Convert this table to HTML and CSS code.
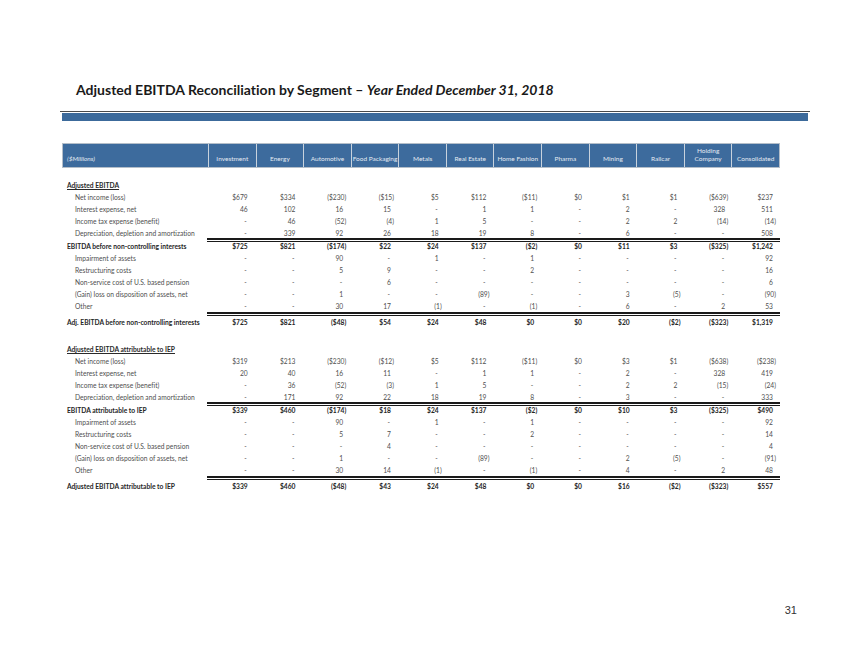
FILE: index.html
```html
<!DOCTYPE html>
<html>
<head>
<meta charset="utf-8">
<link rel="stylesheet" href="styles.css">
</head>
<body>
<div class="page">
  <h1 class="title">Adjusted EBITDA Reconciliation by Segment – <em>Year Ended December 31, 2018</em></h1>
  <div class="rule"></div>
  <div class="band"></div>

  <div class="table">
    <div class="row head">
      <div class="hl">($Millions)</div>
      <div>Investment</div><div>Energy</div><div>Automotive</div><div>Food Packaging</div><div>Metals</div><div>Real Estate</div><div>Home Fashion</div><div>Pharma</div><div>Mining</div><div>Railcar</div><div>Holding<br>Company</div><div>Consolidated</div>
    </div>

    <div class="section first">
      <div class="row"><div class="sh">Adjusted EBITDA</div></div>
      <div class="row"><div class="lb">Net income (loss)</div><div>$679</div><div>$334</div><div class="ng">($230)</div><div class="ng">($15)</div><div>$5</div><div>$112</div><div class="ng">($11)</div><div>$0</div><div>$1</div><div>$1</div><div class="ng">($639)</div><div>$237</div></div>
      <div class="row"><div class="lb">Interest expense, net</div><div>46</div><div>102</div><div>16</div><div>15</div><div class="d">-</div><div>1</div><div>1</div><div class="d">-</div><div>2</div><div class="d">-</div><div>328</div><div>511</div></div>
      <div class="row"><div class="lb">Income tax expense (benefit)</div><div class="d">-</div><div>46</div><div class="ng">(52)</div><div class="ng">(4)</div><div>1</div><div>5</div><div class="d">-</div><div class="d">-</div><div>2</div><div>2</div><div class="ng">(14)</div><div class="ng">(14)</div></div>
      <div class="row"><div class="lb">Depreciation, depletion and amortization</div><div class="d">-</div><div>339</div><div>92</div><div>26</div><div>18</div><div>19</div><div>8</div><div class="d">-</div><div>6</div><div class="d">-</div><div class="d">-</div><div>508</div></div>
      <div class="sep mid"></div>
      <div class="row tot"><div class="tl">EBITDA before non-controlling interests</div><div>$725</div><div>$821</div><div class="ng">($174)</div><div>$22</div><div>$24</div><div>$137</div><div class="ng">($2)</div><div>$0</div><div>$11</div><div>$3</div><div class="ng">($325)</div><div>$1,242</div></div>
      <div class="row"><div class="lb">Impairment of assets</div><div class="d">-</div><div class="d">-</div><div>90</div><div class="d">-</div><div>1</div><div class="d">-</div><div>1</div><div class="d">-</div><div class="d">-</div><div class="d">-</div><div class="d">-</div><div>92</div></div>
      <div class="row"><div class="lb">Restructuring costs</div><div class="d">-</div><div class="d">-</div><div>5</div><div>9</div><div class="d">-</div><div class="d">-</div><div>2</div><div class="d">-</div><div class="d">-</div><div class="d">-</div><div class="d">-</div><div>16</div></div>
      <div class="row"><div class="lb">Non-service cost of U.S. based pension</div><div class="d">-</div><div class="d">-</div><div class="d">-</div><div>6</div><div class="d">-</div><div class="d">-</div><div class="d">-</div><div class="d">-</div><div class="d">-</div><div class="d">-</div><div class="d">-</div><div>6</div></div>
      <div class="row"><div class="lb">(Gain) loss on disposition of assets, net</div><div class="d">-</div><div class="d">-</div><div>1</div><div class="d">-</div><div class="d">-</div><div class="ng">(89)</div><div class="d">-</div><div class="d">-</div><div>3</div><div class="ng">(5)</div><div class="d">-</div><div class="ng">(90)</div></div>
      <div class="row"><div class="lb">Other</div><div class="d">-</div><div class="d">-</div><div>30</div><div>17</div><div class="ng">(1)</div><div class="d">-</div><div class="ng">(1)</div><div class="d">-</div><div>6</div><div class="d">-</div><div>2</div><div>53</div></div>
      <div class="sep end"></div>
      <div class="row tot"><div class="tl">Adj. EBITDA before non-controlling interests</div><div>$725</div><div>$821</div><div class="ng">($48)</div><div>$54</div><div>$24</div><div>$48</div><div>$0</div><div>$0</div><div>$20</div><div class="ng">($2)</div><div class="ng">($323)</div><div>$1,319</div></div>
    </div>

    <div class="section second">
      <div class="row"><div class="sh">Adjusted EBITDA attributable to IEP</div></div>
      <div class="row"><div class="lb">Net income (loss)</div><div>$319</div><div>$213</div><div class="ng">($230)</div><div class="ng">($12)</div><div>$5</div><div>$112</div><div class="ng">($11)</div><div>$0</div><div>$3</div><div>$1</div><div class="ng">($638)</div><div class="ng">($238)</div></div>
      <div class="row"><div class="lb">Interest expense, net</div><div>20</div><div>40</div><div>16</div><div>11</div><div class="d">-</div><div>1</div><div>1</div><div class="d">-</div><div>2</div><div class="d">-</div><div>328</div><div>419</div></div>
      <div class="row"><div class="lb">Income tax expense (benefit)</div><div class="d">-</div><div>36</div><div class="ng">(52)</div><div class="ng">(3)</div><div>1</div><div>5</div><div class="d">-</div><div class="d">-</div><div>2</div><div>2</div><div class="ng">(15)</div><div class="ng">(24)</div></div>
      <div class="row"><div class="lb">Depreciation, depletion and amortization</div><div class="d">-</div><div>171</div><div>92</div><div>22</div><div>18</div><div>19</div><div>8</div><div class="d">-</div><div>3</div><div class="d">-</div><div class="d">-</div><div>333</div></div>
      <div class="sep mid"></div>
      <div class="row tot"><div class="tl">EBITDA attributable to IEP</div><div>$339</div><div>$460</div><div class="ng">($174)</div><div>$18</div><div>$24</div><div>$137</div><div class="ng">($2)</div><div>$0</div><div>$10</div><div>$3</div><div class="ng">($325)</div><div>$490</div></div>
      <div class="row"><div class="lb">Impairment of assets</div><div class="d">-</div><div class="d">-</div><div>90</div><div class="d">-</div><div>1</div><div class="d">-</div><div>1</div><div class="d">-</div><div class="d">-</div><div class="d">-</div><div class="d">-</div><div>92</div></div>
      <div class="row"><div class="lb">Restructuring costs</div><div class="d">-</div><div class="d">-</div><div>5</div><div>7</div><div class="d">-</div><div class="d">-</div><div>2</div><div class="d">-</div><div class="d">-</div><div class="d">-</div><div class="d">-</div><div>14</div></div>
      <div class="row"><div class="lb">Non-service cost of U.S. based pension</div><div class="d">-</div><div class="d">-</div><div class="d">-</div><div>4</div><div class="d">-</div><div class="d">-</div><div class="d">-</div><div class="d">-</div><div class="d">-</div><div class="d">-</div><div class="d">-</div><div>4</div></div>
      <div class="row"><div class="lb">(Gain) loss on disposition of assets, net</div><div class="d">-</div><div class="d">-</div><div>1</div><div class="d">-</div><div class="d">-</div><div class="ng">(89)</div><div class="d">-</div><div class="d">-</div><div>2</div><div class="ng">(5)</div><div class="d">-</div><div class="ng">(91)</div></div>
      <div class="row"><div class="lb">Other</div><div class="d">-</div><div class="d">-</div><div>30</div><div>14</div><div class="ng">(1)</div><div class="d">-</div><div class="ng">(1)</div><div class="d">-</div><div>4</div><div class="d">-</div><div>2</div><div>48</div></div>
      <div class="sep end"></div>
      <div class="row tot"><div class="tl">Adjusted EBITDA attributable to IEP</div><div>$339</div><div>$460</div><div class="ng">($48)</div><div>$43</div><div>$24</div><div>$48</div><div>$0</div><div>$0</div><div>$16</div><div class="ng">($2)</div><div class="ng">($323)</div><div>$557</div></div>
    </div>
  </div>

  <div class="pagenum">31</div>
</div>
</body>
</html>
```

FILE: styles.css
```css
html, body {
  margin: 0;
  padding: 0;
  background: #ffffff;
}

.page {
  width: 850px;
  height: 657px;
  box-sizing: border-box;
  padding-top: 81px;
  display: flex;
  flex-direction: column;
  font-family: Lato, "Liberation Sans", sans-serif;
  font-variant-ligatures: none;
}

.title {
  margin: 0 0 0 76px;
  font-family: Lato, "Liberation Sans", sans-serif;
  font-weight: 700;
  font-size: 14px;
  line-height: 18px;
  color: #1a1a1a;
}

.title em {
  font-style: italic;
}

.rule {
  margin: 12px 0 0 60px;
  width: 750px;
  border-top: 1px solid #4a4a4a;
}

.band {
  margin: 1px 0 0 62px;
  width: 746px;
  height: 8px;
  background: #3c6a9b;
}

.table {
  margin: 22px 0 0 62px;
  width: 718px;
  display: flex;
  flex-direction: column;
}

.row {
  display: grid;
  grid-template-columns: 145px repeat(12, 1fr);
  height: 12px;
  line-height: 12px;
  font-size: 6.7px;
  color: #4f4f4f;
}

.row > div {
  text-align: right;
  padding-right: 7px;
  white-space: nowrap;
}

.row > div.ng {
  padding-right: 4px;
}

.row > div.d {
  padding-right: 8px;
}

.row > .lb,
.row > .sh,
.row > .tl {
  text-align: left;
  padding-right: 0;
}

.lb {
  padding-left: 13px;
}

.sh {
  padding-left: 5px;
  grid-column: 1 / 3;
  font-weight: 700;
  text-decoration: underline;
  color: #2a2a2a;
}

.tl {
  padding-left: 5px;
}

.tot {
  font-weight: 700;
  color: #262626;
}

.head {
  height: 25px;
  line-height: 8px;
  box-sizing: border-box;
  background: #3d6b9d;
  border: 1px solid #b4bec9;
  color: #e3eaf2;
  font-size: 6.5px;
}

.head > div {
  text-align: center;
  padding: 0 0 4px 0;
  border-left: 1px solid #c8d2dd;
  align-self: stretch;
  display: flex;
  align-items: flex-end;
  justify-content: center;
}

.head > .hl {
  border-left: none;
  justify-content: flex-start;
  padding-left: 4px;
  font-style: italic;
}

.section.first {
  margin-top: 11px;
}

.section.second {
  margin-top: 15px;
}

.sep {
  margin-left: 145px;
  height: 1px;
  border-top: 2px solid #1a1a1a;
  border-bottom: 1px solid #1a1a1a;
}

.sep.mid {
  margin-top: -1px;
  margin-bottom: -2px;
}

.sep.end {
  margin-top: 0;
  margin-bottom: 0;
}

.pagenum {
  margin-top: auto;
  margin-bottom: 41px;
  padding-right: 53px;
  text-align: right;
  font-family: "Liberation Sans", Arial, sans-serif;
  font-size: 11px;
  color: #333333;
}
```
